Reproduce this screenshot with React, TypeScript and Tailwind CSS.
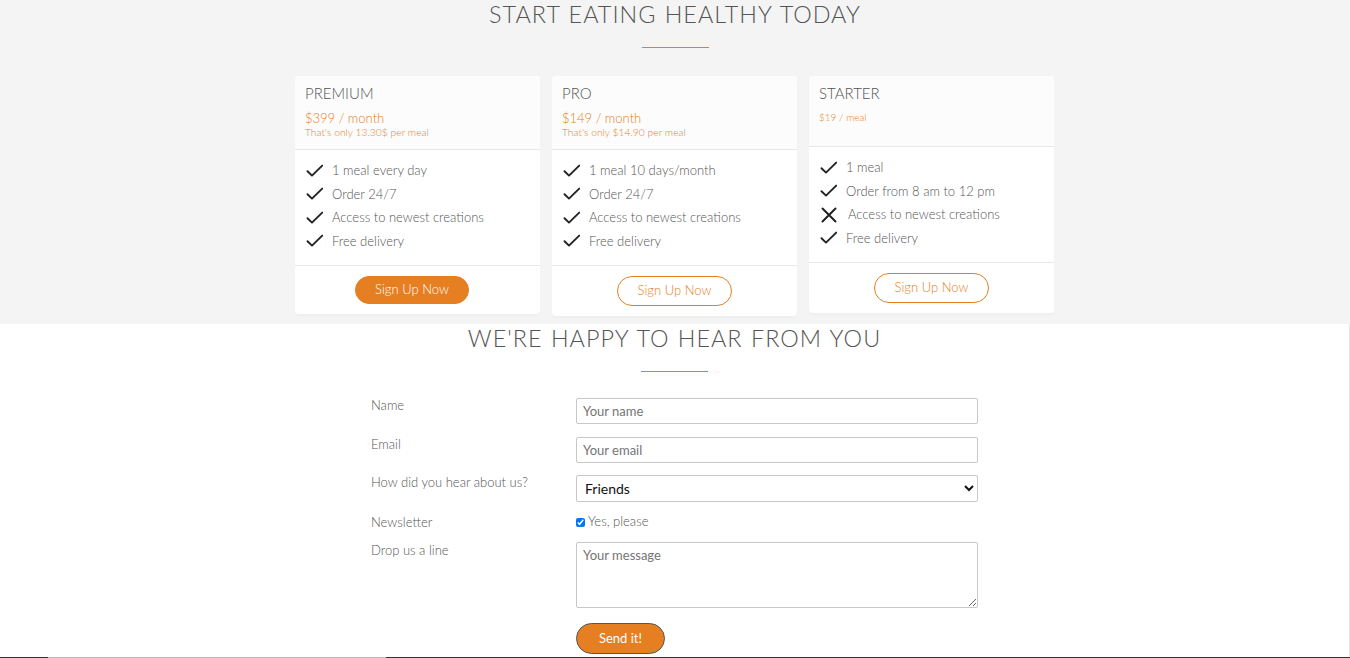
import React from "react";

type Plan = {
  name: string;
  price: string;
  note?: string;
  features: { text: string; ok: boolean }[];
  full: boolean;
};

const plans: Plan[] = [
  {
    name: "PREMIUM",
    price: "$399 / month",
    note: "That's only 13.30$ per meal",
    features: [
      { text: "1 meal every day", ok: true },
      { text: "Order 24/7", ok: true },
      { text: "Access to newest creations", ok: true },
      { text: "Free delivery", ok: true },
    ],
    full: true,
  },
  {
    name: "PRO",
    price: "$149 / month",
    note: "That's only $14.90 per meal",
    features: [
      { text: "1 meal 10 days/month", ok: true },
      { text: "Order 24/7", ok: true },
      { text: "Access to newest creations", ok: true },
      { text: "Free delivery", ok: true },
    ],
    full: false,
  },
  {
    name: "STARTER",
    price: "$19 / meal",
    features: [
      { text: "1 meal", ok: true },
      { text: "Order from 8 am to 12 pm", ok: true },
      { text: "Access to newest creations", ok: false },
      { text: "Free delivery", ok: true },
    ],
    full: false,
  },
];

function Check() {
  return (
    <svg width="18" height="14" viewBox="0 0 18 14" className="shrink-0">
      <path d="M2.5 7.2 L7 11.6 L17.2 1.6" fill="none" stroke="#222" strokeWidth="1.9" strokeLinecap="round" strokeLinejoin="round" />
    </svg>
  );
}

function Cross() {
  return (
    <svg width="18" height="16" viewBox="0 0 18 16" className="shrink-0">
      <path d="M3.5 1.5 L16.5 14.5 M16.5 1.5 L3.5 14.5" fill="none" stroke="#222" strokeWidth="2" strokeLinecap="round" />
    </svg>
  );
}

function PlanCard({ plan }: { plan: Plan }) {
  return (
    <div className="w-[245px] bg-white rounded-[4px] shadow-[0_2px_2px_#efefef] overflow-hidden">
      <div className={`bg-[#fcfcfc] border-b border-[#e8e8e8] px-[10px] pt-[9px] ${plan.note ? "pb-[10px]" : "pb-[22px]"}`}>
        <h3 className="text-[15px] leading-[17px] font-light text-[#555]">{plan.name}</h3>
        {plan.note ? (
          <>
            <div className="mt-[9px] text-[13px] leading-[15px] font-light text-[#e67e22]">{plan.price}</div>
            <div className="text-[10.3px] leading-[13px] font-light text-[#e67e22]">{plan.note}</div>
          </>
        ) : (
          <div className="mt-[9px] text-[10px] leading-[13px] font-light text-[#e67e22]">{plan.price}</div>
        )}
      </div>
      <div className="border-b border-[#e8e8e8] px-[10px] pt-[9px] pb-[12px]">
        <ul>
          {plan.features.map((f, i) => (
            <li key={i} className="flex items-center h-[23.5px] text-[13px] font-light text-[#555]">
              {f.ok ? <Check /> : <Cross />}
              <span className={f.ok ? "ml-[9px]" : "ml-[11px]"}>{f.text}</span>
            </li>
          ))}
        </ul>
      </div>
      <div className="flex justify-center pt-[10px] pb-[10px]">
        {plan.full ? (
          <span className="mr-[11px] flex items-center justify-center w-[114px] h-[28px] rounded-full bg-[#e67e22] border border-[#e67e22] text-white text-[13px] font-light">
            Sign Up Now
          </span>
        ) : (
          <span className="flex items-center justify-center w-[115px] h-[30px] rounded-full bg-white border border-[#e67e22] text-[#e67e22] text-[13px] font-light">
            Sign Up Now
          </span>
        )}
      </div>
    </div>
  );
}

function Heading({ children }: { children: React.ReactNode }) {
  return (
    <div>
      <h2 className="text-center text-[23.4px] leading-[28px] font-light text-[#555] tracking-[1px] [word-spacing:1px]">{children}</h2>
      <div className="mx-auto mt-[19px] w-[67px] h-px bg-[#e67e22]" />
    </div>
  );
}

export default function App() {
  return (
    <div className="font-['Lato',sans-serif] text-[#555] w-[1350px] overflow-hidden">
      <section className="bg-[#f4f4f4] h-[324px]">
        <Heading>START EATING HEALTHY TODAY</Heading>
        <div className="mt-[28px] pr-px flex justify-center items-start gap-[12px]">
          {plans.map((p) => (
            <PlanCard key={p.name} plan={p} />
          ))}
        </div>
      </section>

      <section className="bg-white h-[333px] border-r border-[#e8e8e8]">
        <Heading>WE'RE HAPPY TO HEAR FROM YOU</Heading>
        <form className="mx-auto w-[607px] mt-[26px] text-[13px] font-light" onSubmit={(e) => e.preventDefault()}>
          <div className="flex">
            <label className="w-[205px] leading-[16px] -mt-px">Name</label>
            <input
              type="text"
              placeholder="Your name"
              className="w-[402px] h-[26px] border border-[#c8c8c8] rounded-[2px] px-[6px] text-[13px] font-normal placeholder:text-[#757575] outline-none"
            />
          </div>
          <div className="flex mt-[13px]">
            <label className="w-[205px] leading-[16px] -mt-px">Email</label>
            <input
              type="email"
              placeholder="Your email"
              className="w-[402px] h-[26px] border border-[#c8c8c8] rounded-[2px] px-[6px] text-[13px] font-normal placeholder:text-[#757575] outline-none"
            />
          </div>
          <div className="flex mt-[12px]">
            <label className="w-[205px] leading-[16px] -mt-px">How did you hear about us?</label>
            <select
              defaultValue="friends"
              className="w-[402px] h-[27px] border border-[#c8c8c8] rounded-[2px] pl-[4px] bg-white text-[14px] font-normal text-[#111] outline-none"
            >
              <option value="friends">Friends</option>
              <option value="search">Search engine</option>
              <option value="ad">Advertisement</option>
              <option value="other">Other</option>
            </select>
          </div>
          <div className="flex items-center mt-[12px] h-[16px]">
            <label className="w-[205px] leading-[16px]">Newsletter</label>
            <label className="flex items-center text-[13px] font-light text-[#555]">
              <input type="checkbox" defaultChecked className="w-[9px] h-[9px] m-0 mr-[3px]" />
              Yes, please
            </label>
          </div>
          <div className="flex mt-[12px]">
            <label className="w-[205px] leading-[16px]">Drop us a line</label>
            <textarea
              placeholder="Your message"
              className="w-[402px] h-[66px] border border-[#c8c8c8] rounded-[2px] px-[6px] pt-[3px] text-[13px] font-normal placeholder:text-[#757575] outline-none"
            />
          </div>
          <div className="flex mt-[15px]">
            <div className="w-[205px]" />
            <button
              type="submit"
              className="w-[89px] h-[31px] rounded-full bg-[#e67e22] border border-[#555] text-white text-[13px] font-normal"
            >
              Send it!
            </button>
          </div>
        </form>
      </section>

      <footer className="bg-[#333] h-[60px]">
        <div className="flex h-px">
          <div className="w-[48px]" />
          <div className="w-[338px] bg-[#bbbbbb]" />
        </div>
      </footer>
    </div>
  );
}
